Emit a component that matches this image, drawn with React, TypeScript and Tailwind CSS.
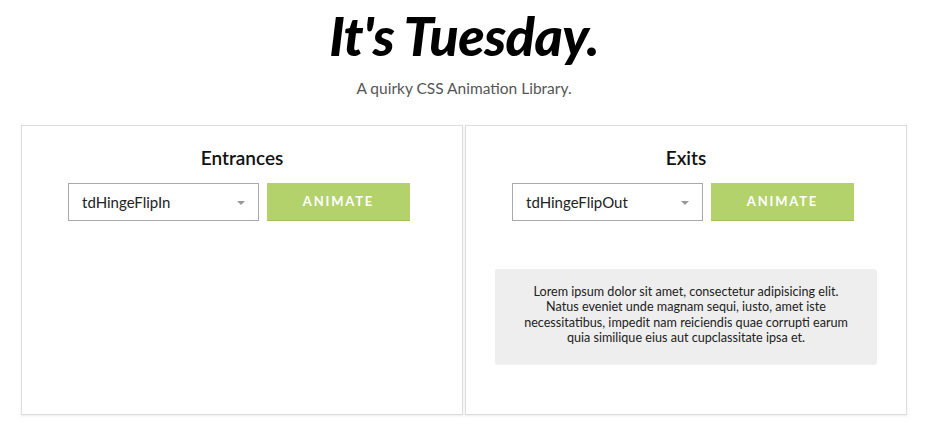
import React from 'react';

const Chooser = ({ value }: { value: string }) => (
  <div className="flex justify-center gap-2 pr-1.5">
    <div className="relative flex h-[38px] w-[191px] items-center border border-[#a9a9a9] bg-white pl-[13px] text-[15px] text-[#222]">
      {value}
      <span className="absolute right-[13px] top-[17px] h-0 w-0 border-x-[4px] border-t-[4px] border-x-transparent border-t-[#999]" />
    </div>
    <button className="h-[38px] w-[143px] bg-[#b3d26c] text-[13px] font-bold tracking-[0.14em] text-white shadow-[inset_0_-1px_0_#a3c25c]">
      ANIMATE
    </button>
  </div>
);

const App = () => {
  return (
    <div className="min-h-screen bg-white font-['Lato','Liberation_Sans',sans-serif]">
      <div className="pt-[4px] text-center">
        <h1 className="text-[54px] font-black italic leading-[64px] tracking-[-0.01em] text-black">It's Tuesday.</h1>
        <p className="mt-[10px] text-[15.5px] leading-5 text-[#555]">A quirky CSS Animation Library.</p>
      </div>

      <div className="mx-[21px] mt-[27px] grid grid-cols-2 gap-[2px]">
        {/* Entrances */}
        <div className="h-[290px] border border-[#dcdcdc] pt-[20px] shadow-[0_1px_2px_rgba(0,0,0,0.08)]">
          <h2 className="mb-[13px] text-center text-[19px] font-semibold leading-6 text-[#111]">Entrances</h2>
          <Chooser value="tdHingeFlipIn" />
        </div>

        {/* Exits */}
        <div className="h-[290px] border border-[#dcdcdc] px-[29px] pt-[20px] shadow-[0_1px_2px_rgba(0,0,0,0.08)]">
          <h2 className="mb-[13px] text-center text-[19px] font-semibold leading-6 text-[#111]">Exits</h2>
          <Chooser value="tdHingeFlipOut" />
          <div className="mt-[48px] rounded-[3px] bg-[#eeeeee] px-6 pb-[19px] pt-[15px] text-center text-[12.6px] leading-[15.3px] text-[#222] shadow-[0_1px_1px_rgba(0,0,0,0.06)]">
            Lorem ipsum dolor sit amet, consectetur adipisicing elit. Natus eveniet unde magnam sequi, iusto, amet iste necessitatibus, impedit nam reiciendis quae corrupti earum quia similique eius aut cupclassitate ipsa et.
          </div>
        </div>
      </div>
    </div>
  );
};

export default App;
